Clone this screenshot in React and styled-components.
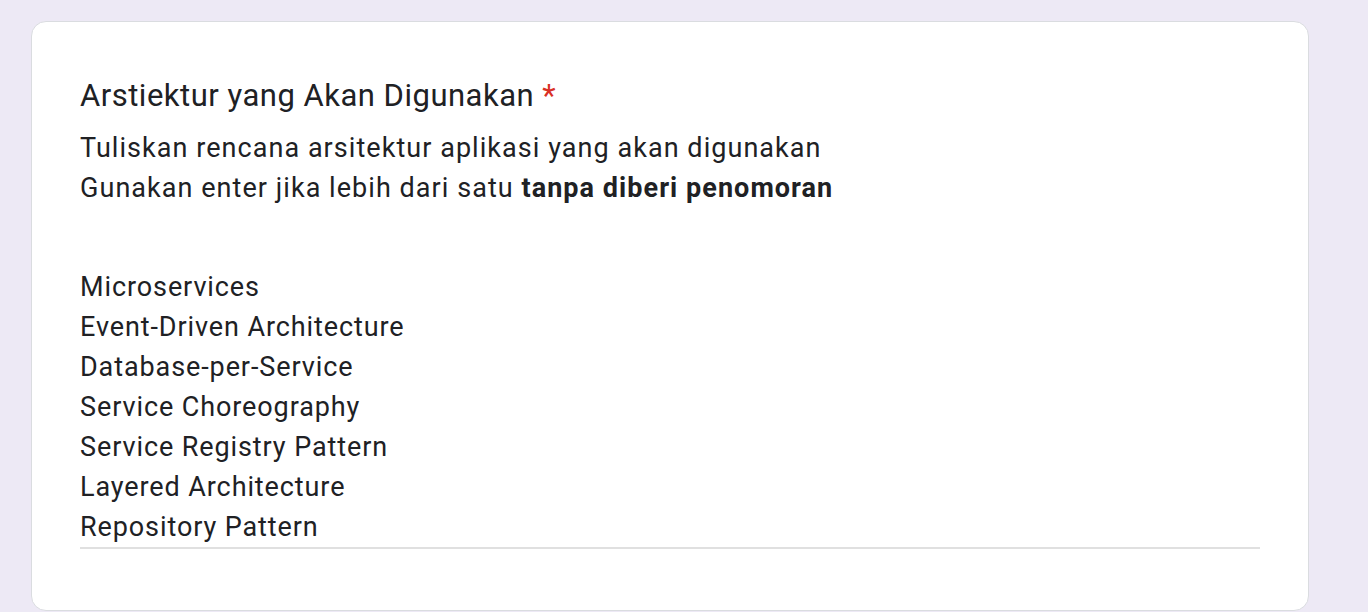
import React from 'react';
import styled, { createGlobalStyle } from 'styled-components';

const GlobalStyle = createGlobalStyle`
  html, body {
    margin: 0;
    padding: 0;
    background: #ede9f5;
  }
  body {
    font-family: Roboto, "Liberation Sans", sans-serif;
    color: #202124;
  }
`;

const Page = styled.div`
  padding: 21px 0 0 31px;
  height: 612px;
  box-sizing: border-box;
  overflow: hidden;
`;

const Card = styled.div`
  width: 1278px;
  height: 590px;
  box-sizing: border-box;
  background: #fff;
  border: 1px solid #dadce0;
  border-radius: 15px;
  padding: 54px 48px 0 48px;
`;

const Title = styled.div`
  font-size: 31px;
  line-height: 40px;
  letter-spacing: 0.5px;
  color: #202124;
`;

const Star = styled.span`
  color: #d93025;
  margin-left: 8px;
`;

const Text = styled.div`
  font-size: 27px;
  line-height: 40px;
  letter-spacing: ${(p) => (p.$wide ? '1.05px' : '0.9px')};
  color: #202124;
`;

const Description = styled(Text)`
  margin-top: 12px;
`;

const Bold = styled.b`
  font-weight: 700;
`;

const Answer = styled.div`
  margin-top: 59px;
  border-bottom: 2px solid #e0e0e0;
`;

const items = [
  'Microservices',
  'Event-Driven Architecture',
  'Database-per-Service',
  'Service Choreography',
  'Service Registry Pattern',
  'Layered Architecture',
  'Repository Pattern',
];

export default function App() {
  return (
    <>
      <GlobalStyle />
      <Page>
        <Card>
          <Title>
            Arstiektur yang Akan Digunakan<Star>*</Star>
          </Title>
          <Description $wide>
            Tuliskan rencana arsitektur aplikasi yang akan digunakan
            <br />
            Gunakan enter jika lebih dari satu <Bold>tanpa diberi penomoran</Bold>
          </Description>
          <Answer>
            {items.map((t) => (
              <Text key={t}>{t}</Text>
            ))}
          </Answer>
        </Card>
      </Page>
    </>
  );
}
